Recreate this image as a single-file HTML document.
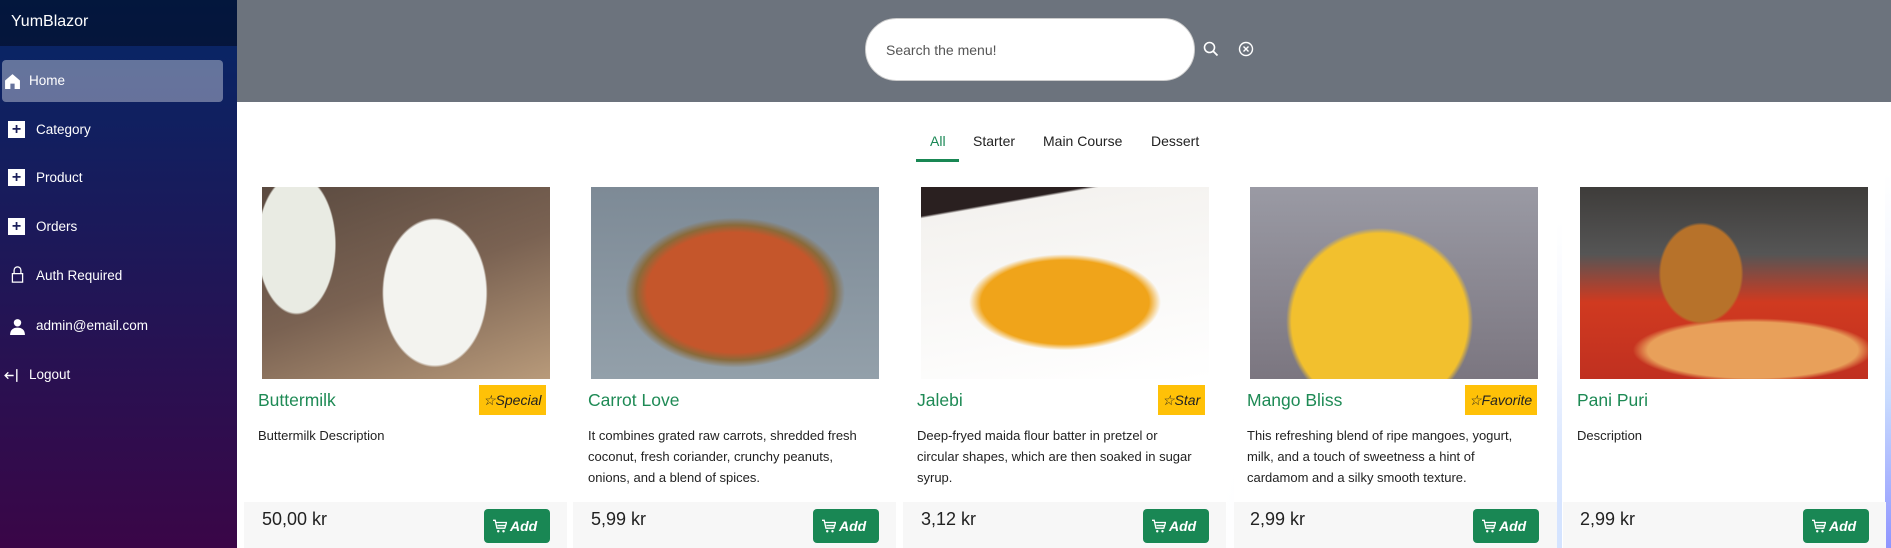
<!DOCTYPE html>
<html><head><meta charset="utf-8"><style>
*{box-sizing:border-box;margin:0;padding:0}
body{width:1891px;height:548px;overflow:hidden;font-family:"Liberation Sans",sans-serif;position:relative;background:#fff}
.side{position:absolute;left:0;top:0;width:237px;height:548px;background:linear-gradient(180deg,#052767 0%,#3a0647 100%)}
.brand{height:46px;background:rgba(0,0,0,.4);color:#fff;font-size:16px;padding:13px 0 0 11px}
.nav{position:absolute;left:0;width:237px;color:#fff;font-size:13.5px;height:42px;line-height:42px}
.nav.act{left:2px;width:221px;background:rgba(255,255,255,.37);border-radius:4px}
.nav .ic{position:absolute;left:8px;top:13px;width:17px;height:17px}
.nav span{position:absolute}
.plus{background:#fff;color:#1b1f5a;font-size:16px;line-height:17px;text-align:center;width:17px;height:17px;position:absolute;left:8px;top:12px;font-weight:bold}
.hdr{position:absolute;left:237px;top:0;width:1654px;height:102px;background:#6c737d}
.main{position:absolute;left:237px;top:102px;width:1654px;height:446px;background:radial-gradient(ellipse 900px 500px at 100% 100%,#8f95ff 0%,#c9dcff 30%,#f4f7ff 55%,#fff 75%)}
.pill{position:absolute;left:865px;top:18px;width:330px;height:63px;background:#fff;border-radius:32px;border:1px solid #ccc;font-size:14px;color:#555;padding:23px 0 0 20px}
.tab{position:absolute;top:133px;font-size:14px;color:#222}
.card{position:absolute;top:168px;width:323px;height:380px;background:#fff;border-radius:6px 6px 0 0}
.img{position:absolute;top:187px;width:288px;height:192px}
.title{position:absolute;top:390px;font-size:17.5px;color:#1e8a55}
.badge{position:absolute;top:385px;height:30px;background:#ffc107;font-size:14px;font-style:italic;color:#222;line-height:30px;padding:0 5px 0 4px}
.desc{position:absolute;top:425px;width:285px;font-size:13px;line-height:21px;color:#222}
.foot{position:absolute;top:502px;width:323px;height:46px;background:#f7f7f7}
.price{position:absolute;top:509px;font-size:18px;color:#222}
.btn{position:absolute;top:509px;width:66px;height:34px;background:#198754;border-radius:4px;color:#fff;font-size:14px;font-style:italic;font-weight:bold;line-height:34px;padding-left:26px}
.btn svg{position:absolute;left:9px;top:10px}
</style></head><body>
<div class="side">
<div class="brand">YumBlazor</div>
<div class="nav act" style="top:60px"><svg class="ic" style="left:2px" viewBox="0 0 16 16"><path d="M8 1L1 7v8h5v-5h4v5h5V7z" fill="#fff"/></svg><span style="left:27px">Home</span></div>
<div class="nav" style="top:109px"><div class="plus">+</div><span style="left:36px">Category</span></div>
<div class="nav" style="top:157px"><div class="plus">+</div><span style="left:36px">Product</span></div>
<div class="nav" style="top:206px"><div class="plus">+</div><span style="left:36px">Orders</span></div>
<div class="nav" style="top:255px"><svg class="ic" style="left:9px;top:11px" viewBox="0 0 16 20"><path d="M4 9V5a4 4 0 0 1 8 0v4M2 9h12v10H2z" fill="none" stroke="#fff" stroke-width="1.5"/></svg><span style="left:36px">Auth Required</span></div>
<div class="nav" style="top:305px"><svg class="ic" style="left:9px" viewBox="0 0 16 16"><circle cx="8" cy="4.5" r="3.5" fill="#fff"/><path d="M1 16c0-5 3-7 7-7s7 2 7 7z" fill="#fff"/></svg><span style="left:36px">admin@email.com</span></div>
<div class="nav" style="top:354px"><svg class="ic" style="left:3px" viewBox="0 0 16 16"><path d="M10 8H2M5 5L2 8l3 3M13 2v12" fill="none" stroke="#fff" stroke-width="1.3"/></svg><span style="left:29px">Logout</span></div>
</div>
<div class="hdr"></div>
<div class="main"></div>
<div class="pill">Search the menu!</div>
<svg style="position:absolute;left:1203px;top:41px" width="16" height="16" viewBox="0 0 16 16"><circle cx="6.5" cy="6.5" r="5" fill="none" stroke="#fff" stroke-width="1.6"/><path d="M10 10l4.5 4.5" stroke="#fff" stroke-width="1.8"/></svg>
<svg style="position:absolute;left:1238px;top:41px" width="16" height="16" viewBox="0 0 16 16"><circle cx="8" cy="8" r="6.5" fill="none" stroke="#fff" stroke-width="1.4"/><path d="M5.5 5.5l5 5M10.5 5.5l-5 5" stroke="#fff" stroke-width="1.4"/></svg>
<div class="tab" style="left:930px;color:#198754">All</div>
<div style="position:absolute;left:916px;top:159px;width:43px;height:3px;background:#198754"></div>
<div class="tab" style="left:973px">Starter</div>
<div class="tab" style="left:1043px">Main Course</div>
<div class="tab" style="left:1151px">Dessert</div>

<div class="card" style="left:244px"></div>
<div class="card" style="left:573px"></div>
<div class="card" style="left:903px"></div>
<div class="card" style="left:1234px"></div>
<div class="card" style="left:1562px"></div>

<div class="img" style="left:262px;background:radial-gradient(ellipse 60px 85px at 60% 55%,#f3f3ef 85%,transparent 88%),radial-gradient(ellipse 45px 80px at 12% 30%,#e9ebe3 85%,transparent 88%),linear-gradient(160deg,#5a4a40,#7a6252 50%,#b89a7a)"></div>
<div class="title" style="left:258px">Buttermilk</div>
<div class="badge" style="left:479px">☆Special</div>
<div class="desc" style="left:258px">Buttermilk Description</div>
<div class="foot" style="left:244px"></div>
<div class="price" style="left:262px">50,00 kr</div>

<div class="img" style="left:591px;background:radial-gradient(ellipse 110px 75px at 50% 55%,#c5562b 80%,#8a6a3a 90%,transparent 100%),linear-gradient(180deg,#7d8a96,#93a0aa)"></div>
<div class="title" style="left:588px">Carrot Love</div>
<div class="desc" style="left:588px">It combines grated raw carrots, shredded fresh coconut, fresh coriander, crunchy peanuts, onions, and a blend of spices.</div>
<div class="foot" style="left:573px"></div>
<div class="price" style="left:591px">5,99 kr</div>

<div class="img" style="left:921px;background:radial-gradient(ellipse 120px 60px at 50% 60%,#f0a41a 70%,transparent 80%),linear-gradient(170deg,#2a2020 0%,#2a2020 12%,#f4f2ef 13%,#ffffff)"></div>
<div class="title" style="left:917px">Jalebi</div>
<div class="badge" style="left:1158px">☆Star</div>
<div class="desc" style="left:917px;width:280px">Deep-fryed maida flour batter in pretzel or circular shapes, which are then soaked in sugar syrup.</div>
<div class="foot" style="left:903px"></div>
<div class="price" style="left:921px">3,12 kr</div>

<div class="img" style="left:1250px;background:radial-gradient(ellipse 110px 110px at 45% 70%,#f2c02e 80%,transparent 85%),linear-gradient(180deg,#9a9aa4,#7b7680)"></div>
<div class="title" style="left:1247px">Mango Bliss</div>
<div class="badge" style="left:1465px">☆Favorite</div>
<div class="desc" style="left:1247px">This refreshing blend of ripe mangoes, yogurt, milk, and a touch of sweetness a hint of cardamom and a silky smooth texture.</div>
<div class="foot" style="left:1234px"></div>
<div class="price" style="left:1250px">2,99 kr</div>

<div class="img" style="left:1580px;background:radial-gradient(ellipse 50px 60px at 42% 45%,#b7722a 80%,transparent 85%),radial-gradient(ellipse 150px 40px at 60% 85%,#e8a05a 70%,transparent 80%),linear-gradient(180deg,#3e3c3a 0%,#555 35%,#d03a20 60%,#c03020)"></div>
<div class="title" style="left:1577px">Pani Puri</div>
<div class="desc" style="left:1577px">Description</div>
<div class="foot" style="left:1563px"></div>
<div class="price" style="left:1580px">2,99 kr</div>

<div class="btn" style="left:484px"><svg width="14" height="14" viewBox="0 0 16 16"><path d="M0 1.5h2.5l2 9h9l2-6.5H3.5M5 7.5h10" fill="none" stroke="#fff" stroke-width="1.5"/><circle cx="6" cy="14" r="1.4" fill="#fff"/><circle cx="12" cy="14" r="1.4" fill="#fff"/></svg>Add</div>
<div class="btn" style="left:813px"><svg width="14" height="14" viewBox="0 0 16 16"><path d="M0 1.5h2.5l2 9h9l2-6.5H3.5M5 7.5h10" fill="none" stroke="#fff" stroke-width="1.5"/><circle cx="6" cy="14" r="1.4" fill="#fff"/><circle cx="12" cy="14" r="1.4" fill="#fff"/></svg>Add</div>
<div class="btn" style="left:1143px"><svg width="14" height="14" viewBox="0 0 16 16"><path d="M0 1.5h2.5l2 9h9l2-6.5H3.5M5 7.5h10" fill="none" stroke="#fff" stroke-width="1.5"/><circle cx="6" cy="14" r="1.4" fill="#fff"/><circle cx="12" cy="14" r="1.4" fill="#fff"/></svg>Add</div>
<div class="btn" style="left:1473px"><svg width="14" height="14" viewBox="0 0 16 16"><path d="M0 1.5h2.5l2 9h9l2-6.5H3.5M5 7.5h10" fill="none" stroke="#fff" stroke-width="1.5"/><circle cx="6" cy="14" r="1.4" fill="#fff"/><circle cx="12" cy="14" r="1.4" fill="#fff"/></svg>Add</div>
<div class="btn" style="left:1803px"><svg width="14" height="14" viewBox="0 0 16 16"><path d="M0 1.5h2.5l2 9h9l2-6.5H3.5M5 7.5h10" fill="none" stroke="#fff" stroke-width="1.5"/><circle cx="6" cy="14" r="1.4" fill="#fff"/><circle cx="12" cy="14" r="1.4" fill="#fff"/></svg>Add</div>
</body></html>
